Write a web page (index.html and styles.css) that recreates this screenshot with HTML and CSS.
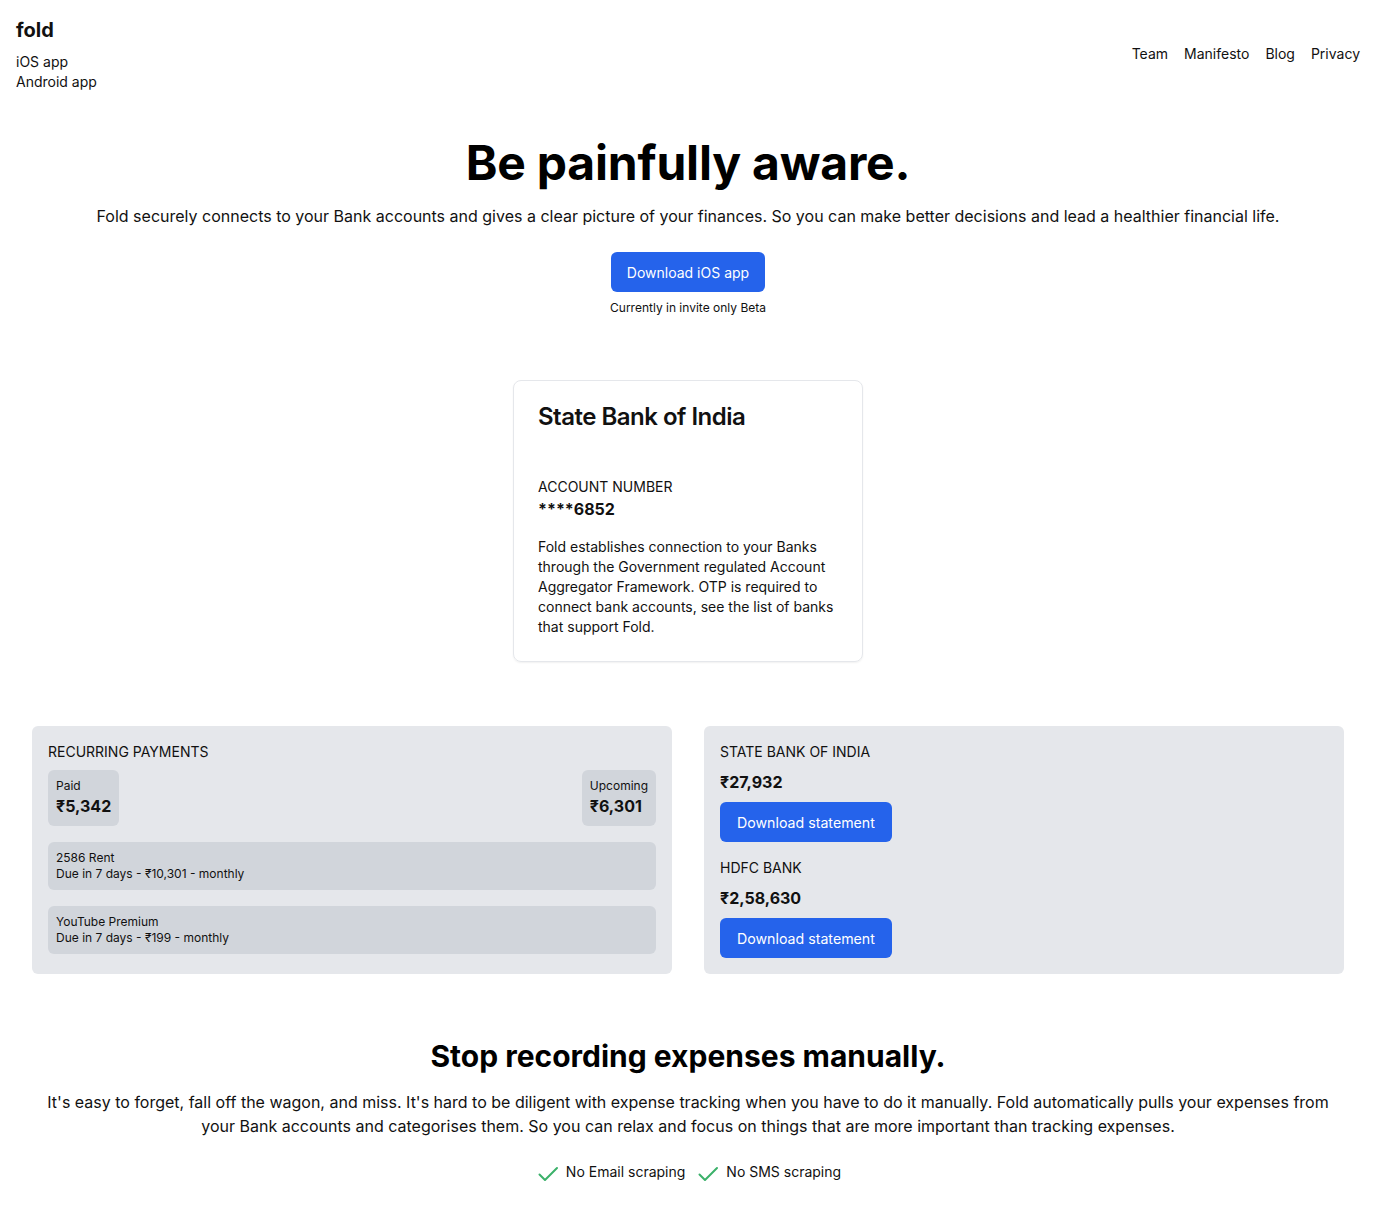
FILE: index.html
```html
<!DOCTYPE html>
<html lang="en">
<head>
<meta charset="utf-8">
<title>Fold</title>
<link rel="stylesheet" href="styles.css">
</head>
<body>
<header class="header">
  <div class="brand">
    <div class="logo">fold</div>
    <ul class="apps">
      <li><a href="#">iOS app</a></li>
      <li><a href="#">Android app</a></li>
    </ul>
  </div>
  <nav class="nav">
    <a href="#">Team</a>
    <a href="#">Manifesto</a>
    <a href="#">Blog</a>
    <a href="#">Privacy</a>
  </nav>
</header>

<main>
  <section class="hero">
    <h1 class="hero-title">Be painfully aware.</h1>
    <p class="hero-text">Fold securely connects to your Bank accounts and gives a clear picture of your finances. So you can make better decisions and lead a healthier financial life.</p>
    <a class="btn btn-hero" href="#">Download iOS app</a>
    <p class="beta">Currently in invite only Beta</p>
  </section>

  <section class="card-wrap">
    <div class="bank-card">
      <h2 class="bank-name">State Bank of India</h2>
      <div class="acc-label">ACCOUNT NUMBER</div>
      <div class="acc-num">****6852</div>
      <p class="card-text">Fold establishes connection to your Banks through the Government regulated Account Aggregator Framework. OTP is required to connect bank accounts, see the list of banks that support Fold.</p>
    </div>
  </section>

  <section class="panels">
    <div class="panel">
      <div class="panel-label">RECURRING PAYMENTS</div>
      <div class="stats">
        <div class="stat">
          <div class="stat-label">Paid</div>
          <div class="stat-value">₹5,342</div>
        </div>
        <div class="stat">
          <div class="stat-label">Upcoming</div>
          <div class="stat-value">₹6,301</div>
        </div>
      </div>
      <div class="item">
        <div>2586 Rent</div>
        <div>Due in 7 days - ₹10,301 - monthly</div>
      </div>
      <div class="item">
        <div>YouTube Premium</div>
        <div>Due in 7 days - ₹199 - monthly</div>
      </div>
    </div>
    <div class="panel panel-banks">
      <div class="bank">
        <div class="panel-label">STATE BANK OF INDIA</div>
        <div class="balance">₹27,932</div>
        <a class="btn btn-stmt" href="#">Download statement</a>
      </div>
      <div class="bank">
        <div class="panel-label">HDFC BANK</div>
        <div class="balance">₹2,58,630</div>
        <a class="btn btn-stmt" href="#">Download statement</a>
      </div>
    </div>
  </section>

  <section class="manual">
    <h2 class="manual-title">Stop recording expenses manually.</h2>
    <p class="manual-text">It's easy to forget, fall off the wagon, and miss. It's hard to be diligent with expense tracking when you have to do it manually. Fold automatically pulls your expenses from your Bank accounts and categorises them. So you can relax and focus on things that are more important than tracking expenses.</p>
    <ul class="checks">
      <li class="check">
        <svg class="check-icon" viewBox="0 0 24 24" fill="none" stroke="currentColor" stroke-width="2" stroke-linecap="round" stroke-linejoin="round"><path d="M4.5 12.5l5.5 5.5 12-12"/></svg>
        <span>No Email scraping</span>
      </li>
      <li class="check">
        <svg class="check-icon" viewBox="0 0 24 24" fill="none" stroke="currentColor" stroke-width="2" stroke-linecap="round" stroke-linejoin="round"><path d="M4.5 12.5l5.5 5.5 12-12"/></svg>
        <span>No SMS scraping</span>
      </li>
    </ul>
  </section>
</main>
</body>
</html>
```

FILE: styles.css
```css
* { box-sizing: border-box; }

body {
  margin: 0;
  font-family: Inter, "Noto Sans", "Liberation Sans", sans-serif;
  color: #111;
  background: #fff;
}

a { color: inherit; text-decoration: none; }
ul { list-style: none; margin: 0; padding: 0; }
h1, h2, p { margin: 0; }

.header {
  display: flex;
  justify-content: space-between;
  align-items: center;
  padding: 16px;
}

.logo {
  font-size: 20px;
  line-height: 28px;
  font-weight: 700;
  margin-bottom: 8px;
}

.apps li {
  font-size: 14px;
  line-height: 20px;
}

.nav {
  display: flex;
  gap: 16px;
  font-size: 14px;
  line-height: 20px;
}

.hero {
  display: flex;
  flex-direction: column;
  align-items: center;
  text-align: center;
  padding-top: 31px;
}

.hero-title {
  font-size: 48px;
  line-height: 48px;
  font-weight: 700;
  letter-spacing: -0.2px;
  color: #000;
}

.hero-text {
  margin-top: 17px;
  font-size: 16px;
  line-height: 24px;
}

.btn {
  display: inline-flex;
  align-items: center;
  justify-content: center;
  height: 40px;
  padding: 0 16px;
  background: #2563eb;
  color: #fff;
  border-radius: 6px;
  font-size: 14px;
}

.btn-hero {
  margin-top: 24px;
}

.beta {
  margin-top: 8px;
  font-size: 12px;
  line-height: 16px;
}

.card-wrap {
  display: flex;
  justify-content: center;
  padding-top: 64px;
}

.bank-card {
  width: 350px;
  border: 1px solid #e5e7eb;
  border-radius: 8px;
  box-shadow: 0 1px 2px rgba(0, 0, 0, 0.06);
  padding: 20px 24px 24px;
}

.bank-name {
  font-size: 24px;
  line-height: 32px;
  font-weight: 600;
  letter-spacing: -0.5px;
}

.acc-label {
  margin-top: 44px;
  font-size: 14px;
  line-height: 20px;
}

.acc-num {
  font-size: 16px;
  line-height: 24px;
  font-weight: 700;
}

.card-text {
  margin-top: 16px;
  font-size: 14px;
  line-height: 20px;
}

.panels {
  display: grid;
  grid-template-columns: 1fr 1fr;
  gap: 32px;
  padding: 64px 32px 0;
}

.panel {
  background: #e5e7eb;
  border-radius: 6px;
  padding: 16px;
  display: flex;
  flex-direction: column;
  gap: 16px;
}

.panel-label {
  font-size: 14px;
  line-height: 20px;
  margin-bottom: -8px;
}

.stats {
  display: flex;
  justify-content: space-between;
}

.stat {
  background: #d1d5db;
  border-radius: 6px;
  padding: 8px;
}

.stat-label {
  font-size: 12px;
  line-height: 16px;
}

.stat-value {
  font-size: 16px;
  line-height: 24px;
  font-weight: 700;
}

.item {
  background: #d1d5db;
  border-radius: 6px;
  padding: 8px;
  font-size: 12px;
  line-height: 16px;
}

.bank {
  display: flex;
  flex-direction: column;
  align-items: flex-start;
  gap: 8px;
}

.bank .panel-label { margin-bottom: 0; }

.balance {
  font-size: 16px;
  line-height: 24px;
  font-weight: 700;
}

.btn-stmt {
  padding: 0 17px;
  font-size: 14.2px;
}

.manual {
  text-align: center;
  padding: 64px 40px 40px;
}

.manual-title {
  font-size: 30px;
  line-height: 36px;
  font-weight: 700;
  color: #000;
}

.manual-text {
  margin-top: 16px;
  font-size: 16px;
  line-height: 24px;
}

.checks {
  margin-top: 20px;
  display: flex;
  justify-content: center;
  gap: 10px;
}

.check {
  display: flex;
  align-items: center;
  gap: 7px;
  font-size: 14px;
  line-height: 20px;
}

.check-icon {
  width: 24px;
  height: 24px;
  color: #3bb16a;
  margin-top: 4px;
}
```
